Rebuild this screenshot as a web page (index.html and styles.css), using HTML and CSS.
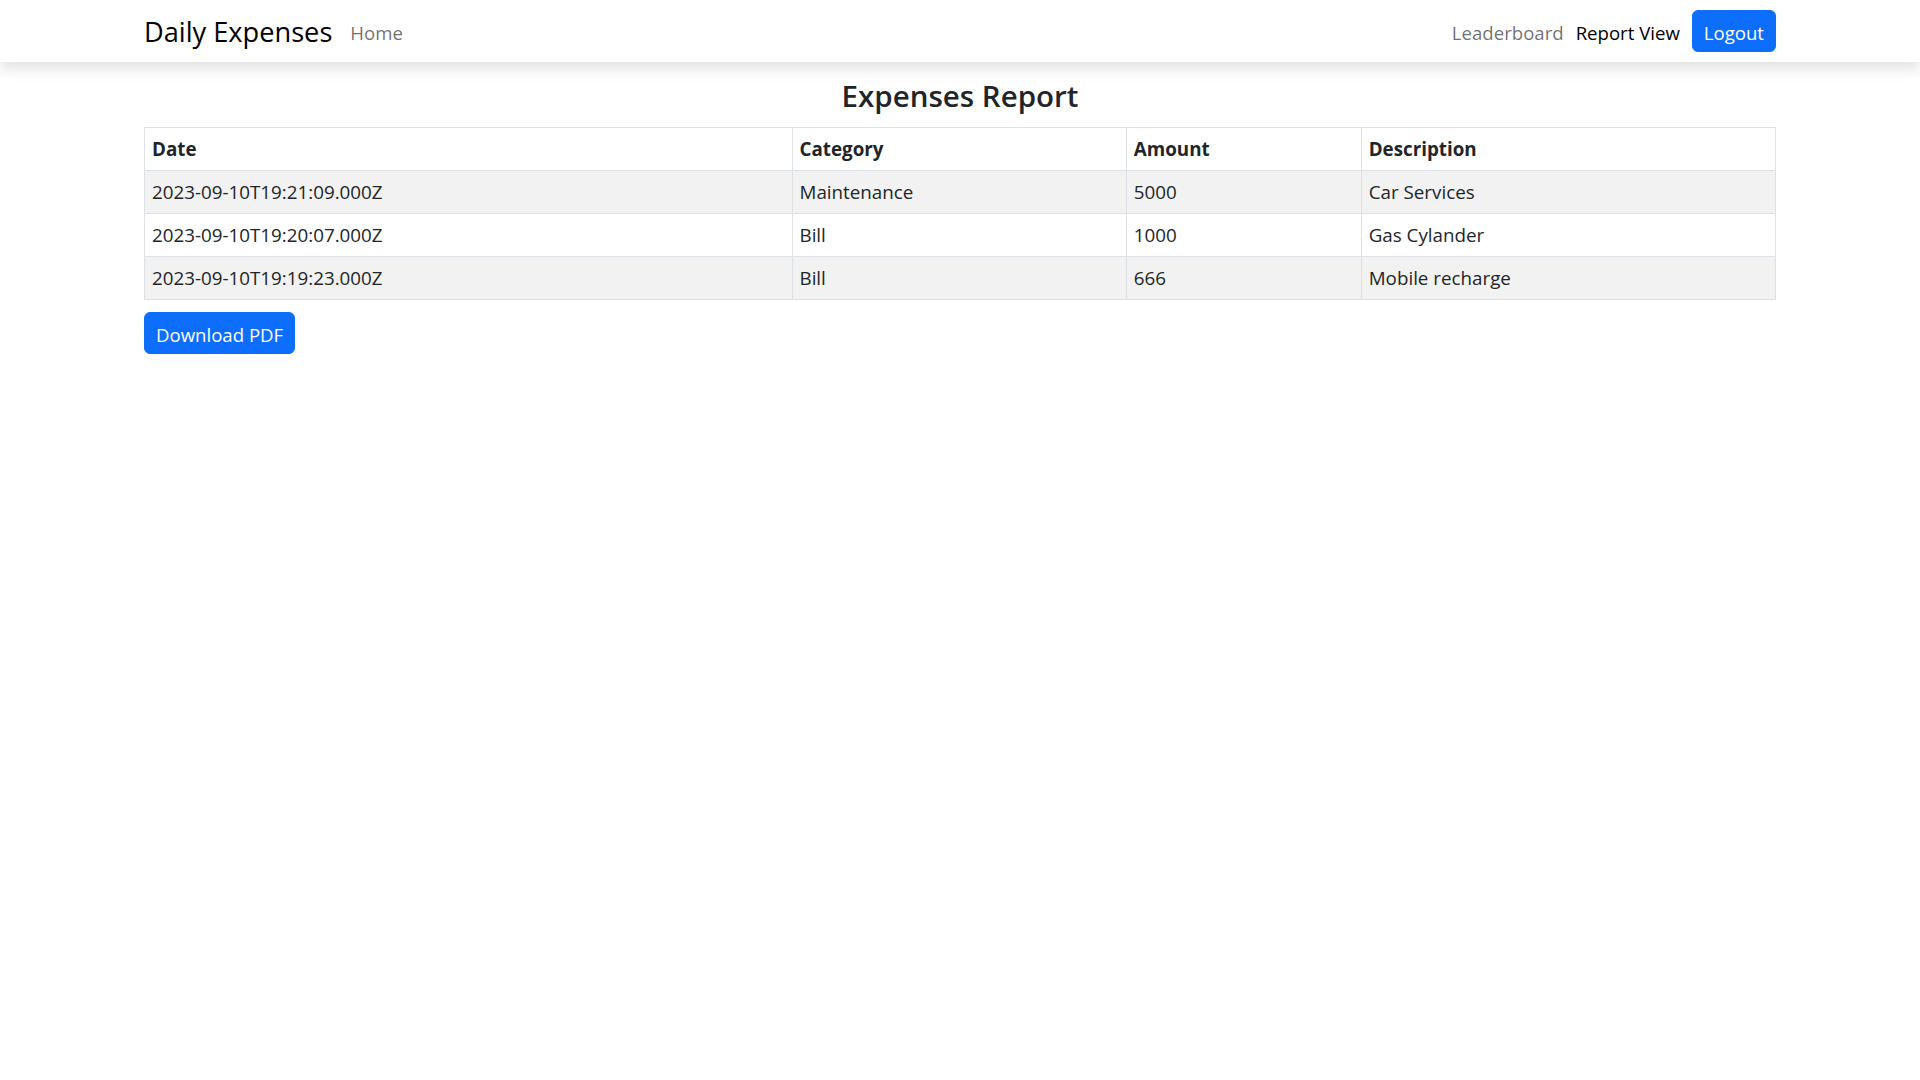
FILE: index.html
```html
<!DOCTYPE html>
<html lang="en">
<head>
<meta charset="utf-8">
<title>Daily Expenses</title>
<link rel="stylesheet" href="styles.css">
</head>
<body>
<nav class="navbar">
  <div class="nav-inner">
    <div class="nav-left">
      <a class="brand" href="#">Daily Expenses</a>
      <a class="nav-link" href="#">Home</a>
    </div>
    <div class="nav-right">
      <a class="nav-link" href="#">Leaderboard</a>
      <a class="nav-link active" href="#">Report View</a>
      <button class="btn btn-primary nav-btn" type="button">Logout</button>
    </div>
  </div>
</nav>
<main class="content">
  <h2 class="title">Expenses Report</h2>
  <table class="report">
    <colgroup>
      <col class="c-date">
      <col class="c-cat">
      <col class="c-amt">
      <col class="c-desc">
    </colgroup>
    <thead>
      <tr><th>Date</th><th>Category</th><th>Amount</th><th>Description</th></tr>
    </thead>
    <tbody>
      <tr class="odd"><td>2023-09-10T19:21:09.000Z</td><td>Maintenance</td><td>5000</td><td>Car Services</td></tr>
      <tr><td>2023-09-10T19:20:07.000Z</td><td>Bill</td><td>1000</td><td>Gas Cylander</td></tr>
      <tr class="odd"><td>2023-09-10T19:19:23.000Z</td><td>Bill</td><td>666</td><td>Mobile recharge</td></tr>
    </tbody>
  </table>
  <button class="btn btn-primary download" type="button">Download PDF</button>
</main>
</body>
</html>
```
FILE: styles.css
```css
* { box-sizing: border-box; }
html, body { margin: 0; padding: 0; background: #fff; }
body {
  font-family: "Segoe UI", "Open Sans", "Noto Sans", sans-serif;
  font-size: 18.8px;
  color: #212529;
}
a { text-decoration: none; }

.navbar {
  height: 62px;
  background: #fff;
  box-shadow: 0 6px 14px rgba(0, 0, 0, 0.13);
  position: relative;
  z-index: 2;
}
.nav-inner {
  width: 85%;
  height: 100%;
  margin: 0 auto;
  display: flex;
  align-items: center;
  justify-content: space-between;
}
.nav-left, .nav-right {
  display: flex;
  align-items: center;
}
.nav-left { gap: 18px; }
.nav-right { gap: 12px; }
.brand {
  font-size: 27.2px;
  color: #000;
  line-height: 36px;
  padding-top: 2px;
}
.nav-link {
  color: rgba(0, 0, 0, 0.58);
  font-size: 18.6px;
  line-height: 26px;
  padding-top: 3px;
}
.nav-link.active { color: #000; }

.btn {
  font-family: inherit;
  font-size: 18.6px;
  line-height: 26px;
  border: 1px solid #0d6efd;
  border-radius: 6px;
  cursor: pointer;
}
.btn-primary {
  background: #0d6efd;
  color: #fff;
}
.nav-btn {
  height: 42px;
  padding: 3px 11px 0;
}

.content {
  width: 85%;
  margin: 0 auto;
}
.title {
  margin: 15px 0 13px;
  font-size: 29.5px;
  font-weight: 600;
  line-height: 37px;
  text-align: center;
  color: #212529;
}
.report {
  width: 100%;
  border-collapse: collapse;
  border: 1px solid #dee2e6;
  table-layout: fixed;
}
.c-date { width: 39.7%; }
.c-cat { width: 20.5%; }
.c-amt { width: 14.4%; }
.c-desc { width: 25.4%; }
.report th, .report td {
  border: 1px solid #dee2e6;
  padding: 8px 7px;
  line-height: 26.1px;
  text-align: left;
  vertical-align: top;
}
.report th { font-weight: 700; }
.report tr.odd td { background: #f2f2f2; }
.download {
  margin-top: 12px;
  height: 42px;
  padding: 3px 11px 0;
}
```
